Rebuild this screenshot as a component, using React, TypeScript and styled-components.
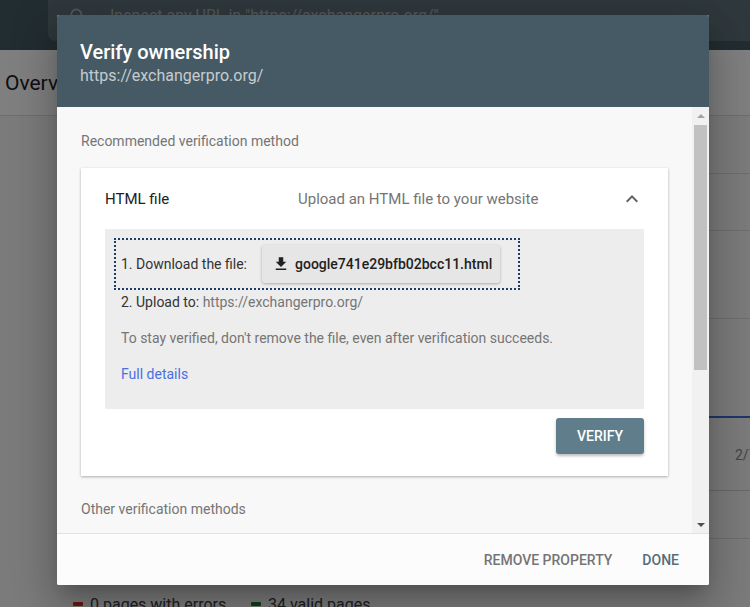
import styled, { createGlobalStyle } from "styled-components";

const GlobalStyle = createGlobalStyle`
  html, body {
    margin: 0;
    padding: 0;
  }
  body {
    font-family: Roboto, "Noto Sans", Arial, sans-serif;
    background: #f6f6f6;
    overflow: hidden;
  }
  * {
    box-sizing: border-box;
  }
`;

/* ---------- page behind the dialog ---------- */

const Page = styled.div`
  position: relative;
  width: 750px;
  height: 607px;
  overflow: hidden;
  background: #f6f6f6;
  display: flex;
  flex-direction: column;
`;

const TopBar = styled.header`
  height: 50px;
  flex-shrink: 0;
  background: #455a64;
  padding-left: 48px;
  display: flex;
  align-items: flex-start;
`;

const SearchBox = styled.div`
  flex: 1;
  height: 41px;
  background: rgba(255, 255, 255, 0.14);
  border-bottom-left-radius: 8px;
  display: flex;
  align-items: center;
  gap: 22px;
  padding: 0 0 10px 20px;
  color: rgba(255, 255, 255, 0.45);
  font-size: 16px;
  white-space: nowrap;
`;

const TitleBand = styled.div`
  height: 66px;
  flex-shrink: 0;
  background: #fff;
  border-bottom: 1px solid #dcdcdc;
  display: flex;
  align-items: center;
  padding-left: 5px;
  font-size: 21px;
  color: #202124;
`;

const ReportArea = styled.div`
  flex: 1;
  display: flex;
  flex-direction: column;
  margin-left: 60px;
`;

const ReportRow = styled.div<{ $h: number }>`
  height: ${(p) => p.$h}px;
  flex-shrink: 0;
  border-bottom: 1px solid #dadada;
`;

const Chart = styled.div`
  height: 172px;
  flex-shrink: 0;
  padding-top: 97px;
  border-bottom: 1px solid #d0d0d0;
`;

const ChartLine = styled.div`
  height: 2px;
  background: #3b6fd6;
`;

const AxisLabel = styled.div`
  padding: 29px 0 0 675px;
  font-size: 14px;
  color: #888;
  white-space: nowrap;
`;

const Legend = styled.div`
  margin-top: auto;
  display: flex;
  align-items: center;
  padding: 0 0 0 13px;
  height: 18px;
  margin-bottom: -6px;
  font-size: 16px;
  color: #3c4043;
  white-space: nowrap;
`;

const LegendItem = styled.div<{ $w: number }>`
  display: flex;
  align-items: center;
  gap: 7px;
  width: ${(p) => p.$w}px;
`;

const Swatch = styled.span<{ $color: string }>`
  width: 10px;
  height: 4px;
  border-radius: 1px;
  background: ${(p) => p.$color};
`;

const Scrim = styled.div`
  position: absolute;
  inset: 0;
  background: rgba(0, 0, 0, 0.5);
`;

/* ---------- dialog ---------- */

const Dialog = styled.div`
  position: absolute;
  left: 57px;
  top: 15px;
  width: 652px;
  height: 570px;
  display: flex;
  flex-direction: column;
  background: #fff;
  border-radius: 2px;
  overflow: hidden;
  box-shadow: 0 11px 15px -7px rgba(0, 0, 0, 0.2),
    0 24px 38px 3px rgba(0, 0, 0, 0.14), 0 9px 46px 8px rgba(0, 0, 0, 0.12);
`;

const DialogHeader = styled.div`
  height: 92px;
  flex-shrink: 0;
  background: #455a64;
  padding: 25px 24px 0 23px;
`;

const Title = styled.h2`
  margin: 0;
  font-size: 20px;
  line-height: 24px;
  font-weight: 500;
  color: #fff;
`;

const Subtitle = styled.div`
  font-size: 16px;
  line-height: 24px;
  color: rgba(255, 255, 255, 0.7);
`;

const DialogBody = styled.div`
  flex: 1;
  min-height: 0;
  display: flex;
  background: #f8f8f8;
  overflow: hidden;
`;

const Content = styled.div`
  flex: 1;
  padding: 24px 24px 0;
  display: flex;
  flex-direction: column;
`;

const SectionLabel = styled.div<{ $gap?: number }>`
  margin-top: ${(p) => p.$gap ?? 0}px;
  font-size: 14px;
  line-height: 20px;
  color: #757575;
`;

const Card = styled.div`
  margin-top: 17px;
  flex-shrink: 0;
  background: #fff;
  padding: 0 24px 22px;
  box-shadow: 0 1px 3px rgba(0, 0, 0, 0.2), 0 1px 2px rgba(0, 0, 0, 0.12);
`;

const CardHeader = styled.div`
  height: 61px;
  display: grid;
  grid-template-columns: 193px 1fr 24px;
  align-items: center;
  font-size: 15px;
`;

const MethodName = styled.div`
  color: #212121;
`;

const MethodDesc = styled.div`
  color: #757575;
`;

const StepsBox = styled.div`
  background: #ededed;
  padding: 9px 16px 25px;
  display: flex;
  flex-direction: column;
  font-size: 14px;
  line-height: 20px;
`;

const DownloadRow = styled.div`
  align-self: flex-start;
  margin-left: -7px;
  display: flex;
  align-items: center;
  gap: 15px;
  padding: 5px 18px 5px 5px;
  border: 2px dotted #1b3d66;
  color: #333;
`;

const FileButton = styled.button`
  height: 38px;
  display: flex;
  align-items: center;
  gap: 5px;
  padding: 0 8px 0 10px;
  border: none;
  border-radius: 3px;
  background: #e6e6e6;
  box-shadow: 0 1px 3px rgba(0, 0, 0, 0.28);
  font-family: inherit;
  font-size: 14px;
  font-weight: 500;
  color: #212121;
`;

const StepLine = styled.div<{ $gap: number; $muted?: boolean }>`
  margin-top: ${(p) => p.$gap}px;
  color: ${(p) => (p.$muted ? "#757575" : "#333")};
`;

const Muted = styled.span`
  color: #757575;
`;

const DetailsLink = styled.a`
  margin-top: 16px;
  color: #4a6fe3;
  text-decoration: none;
`;

const VerifyRow = styled.div`
  display: flex;
  justify-content: flex-end;
  margin-top: 9px;
`;

const VerifyButton = styled.button`
  width: 88px;
  height: 36px;
  border: none;
  border-radius: 3px;
  background: #607d8b;
  color: #fff;
  font-family: inherit;
  font-size: 14px;
  font-weight: 500;
  box-shadow: 0 2px 3px rgba(0, 0, 0, 0.26);
`;

const Scrollbar = styled.div`
  width: 17px;
  flex-shrink: 0;
  background: #f1f1f1;
  display: flex;
  flex-direction: column;
  align-items: center;
`;

const ScrollArrow = styled.div<{ $down?: boolean; $color: string }>`
  height: 17px;
  width: 100%;
  display: flex;
  align-items: center;
  justify-content: center;

  &::after {
    content: "";
    border-left: 4px solid transparent;
    border-right: 4px solid transparent;
    ${(p) =>
      p.$down
        ? `border-top: 4px solid ${p.$color};`
        : `border-bottom: 4px solid ${p.$color};`}
  }
`;

const Thumb = styled.div`
  width: 13px;
  height: 245px;
  margin-top: 1px;
  background: #c1c1c1;
`;

const Spacer = styled.div`
  flex: 1;
`;

const DialogFooter = styled.div`
  height: 52px;
  flex-shrink: 0;
  border-top: 1px solid #e2e2e2;
  background: #fcfcfc;
  display: flex;
  justify-content: flex-end;
  align-items: center;
  gap: 14px;
  padding-right: 22px;
`;

const TextButton = styled.button<{ $color: string }>`
  height: 36px;
  padding: 0 8px;
  border: none;
  background: transparent;
  font-family: inherit;
  font-size: 14px;
  font-weight: 500;
  color: ${(p) => p.$color};
`;

const SearchIcon = () => (
  <svg width="20" height="20" viewBox="0 0 24 24" fill="none">
    <circle cx="10" cy="10" r="6" stroke="currentColor" strokeWidth="2" />
    <path d="M14.5 14.5L20 20" stroke="currentColor" strokeWidth="2" />
  </svg>
);

const DownloadIcon = () => (
  <svg width="18" height="18" viewBox="0 0 24 24" fill="#212121">
    <path d="M19 9h-4V3H9v6H5l7 7 7-7zM5 18v2h14v-2H5z" />
  </svg>
);

const ChevronUp = () => (
  <svg width="24" height="24" viewBox="0 0 24 24" fill="#5f6368">
    <path d="M12 8l-6 6 1.41 1.41L12 10.83l4.59 4.58L18 14z" />
  </svg>
);

export default function App() {
  return (
    <Page>
      <GlobalStyle />
      <TopBar>
        <SearchBox>
          <SearchIcon />
          <span>Inspect any URL in "https://exchangerpro.org/"</span>
        </SearchBox>
      </TopBar>
      <TitleBand>Overview</TitleBand>
      <ReportArea>
        <ReportRow $h={58} />
        <ReportRow $h={57} />
        <ReportRow $h={88} />
        <Chart>
          <ChartLine />
          <AxisLabel>2/7/19</AxisLabel>
        </Chart>
        <ReportRow $h={48} />
        <Legend>
          <LegendItem $w={178}>
            <Swatch $color="#d93025" />
            0 pages with errors
          </LegendItem>
          <LegendItem $w={200}>
            <Swatch $color="#188038" />
            34 valid pages
          </LegendItem>
        </Legend>
      </ReportArea>

      <Scrim />

      <Dialog>
        <DialogHeader>
          <Title>Verify ownership</Title>
          <Subtitle>https://exchangerpro.org/</Subtitle>
        </DialogHeader>

        <DialogBody>
          <Content>
            <SectionLabel>Recommended verification method</SectionLabel>
            <Card>
              <CardHeader>
                <MethodName>HTML file</MethodName>
                <MethodDesc>Upload an HTML file to your website</MethodDesc>
                <ChevronUp />
              </CardHeader>
              <StepsBox>
                <DownloadRow>
                  1. Download the file:
                  <FileButton>
                    <DownloadIcon />
                    google741e29bfb02bcc11.html
                  </FileButton>
                </DownloadRow>
                <StepLine $gap={2}>
                  2. Upload to: <Muted>https://exchangerpro.org/</Muted>
                </StepLine>
                <StepLine $gap={16} $muted>
                  To stay verified, don't remove the file, even after
                  verification succeeds.
                </StepLine>
                <DetailsLink href="#">Full details</DetailsLink>
              </StepsBox>
              <VerifyRow>
                <VerifyButton>VERIFY</VerifyButton>
              </VerifyRow>
            </Card>
            <SectionLabel $gap={23}>Other verification methods</SectionLabel>
          </Content>
          <Scrollbar>
            <ScrollArrow $color="#a3a3a3" />
            <Thumb />
            <Spacer />
            <ScrollArrow $down $color="#505050" />
          </Scrollbar>
        </DialogBody>

        <DialogFooter>
          <TextButton $color="#757575">REMOVE PROPERTY</TextButton>
          <TextButton $color="#546e7a">DONE</TextButton>
        </DialogFooter>
      </Dialog>
    </Page>
  );
}
